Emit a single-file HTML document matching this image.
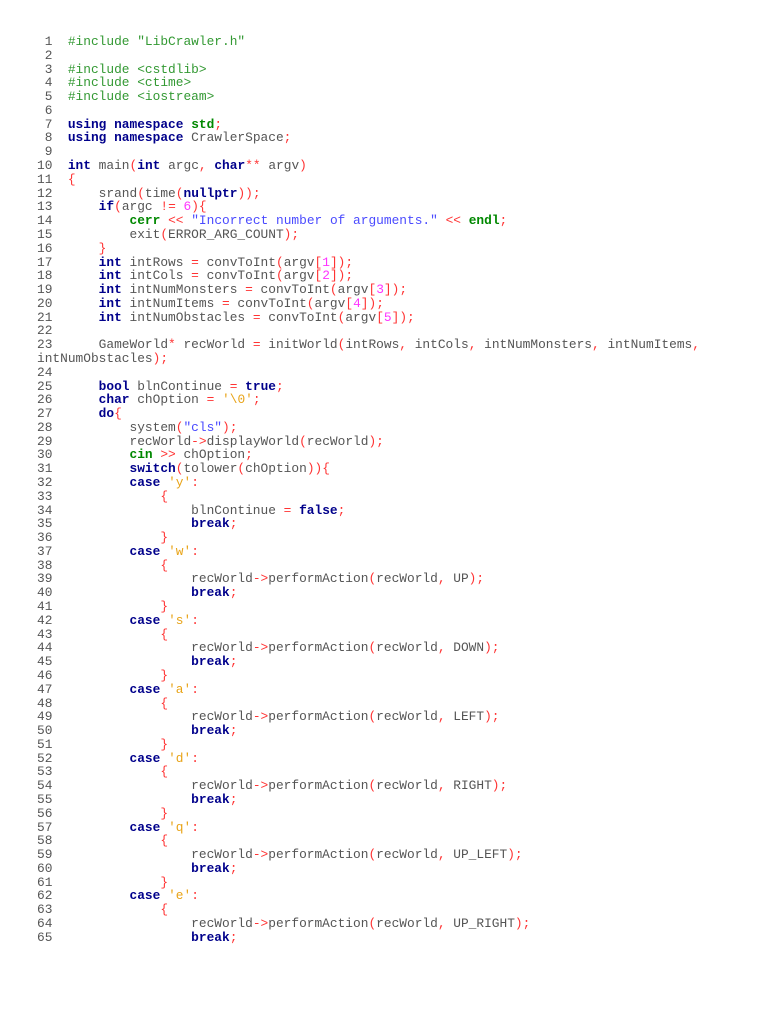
<!DOCTYPE html>
<html><head><meta charset="utf-8"><style>
html,body{margin:0;padding:0;background:#fff;width:768px;height:1024px;overflow:hidden}
pre{position:absolute;left:37px;top:35px;margin:0;font-family:"Liberation Mono","Courier New",monospace;font-size:12.85px;line-height:13.785px;color:#555;white-space:pre}
.k{color:#00008b;font-weight:bold}
.g{color:#008800;font-weight:bold}
.p{color:#339933}
.s{color:#4a4aff}
.n{color:#ff33ff}
.c{color:#e8a317}
.o{color:#ff3333}
</style></head><body>
<pre> 1  <span class="p">#include "LibCrawler.h"</span>
 2
 3  <span class="p">#include &lt;cstdlib&gt;</span>
 4  <span class="p">#include &lt;ctime&gt;</span>
 5  <span class="p">#include &lt;iostream&gt;</span>
 6
 7  <span class="k">using namespace</span> <span class="g">std</span><span class="o">;</span>
 8  <span class="k">using namespace</span> CrawlerSpace<span class="o">;</span>
 9
10  <span class="k">int</span> main<span class="o">(</span><span class="k">int</span> argc<span class="o">,</span> <span class="k">char</span><span class="o">**</span> argv<span class="o">)</span>
11  <span class="o">{</span>
12      srand<span class="o">(</span>time<span class="o">(</span><span class="k">nullptr</span><span class="o">));</span>
13      <span class="k">if</span><span class="o">(</span>argc <span class="o">!=</span> <span class="n">6</span><span class="o">){</span>
14          <span class="g">cerr</span> <span class="o">&lt;&lt;</span> <span class="s">"Incorrect number of arguments."</span> <span class="o">&lt;&lt;</span> <span class="g">endl</span><span class="o">;</span>
15          exit<span class="o">(</span>ERROR_ARG_COUNT<span class="o">);</span>
16      <span class="o">}</span>
17      <span class="k">int</span> intRows <span class="o">=</span> convToInt<span class="o">(</span>argv<span class="o">[</span><span class="n">1</span><span class="o">]);</span>
18      <span class="k">int</span> intCols <span class="o">=</span> convToInt<span class="o">(</span>argv<span class="o">[</span><span class="n">2</span><span class="o">]);</span>
19      <span class="k">int</span> intNumMonsters <span class="o">=</span> convToInt<span class="o">(</span>argv<span class="o">[</span><span class="n">3</span><span class="o">]);</span>
20      <span class="k">int</span> intNumItems <span class="o">=</span> convToInt<span class="o">(</span>argv<span class="o">[</span><span class="n">4</span><span class="o">]);</span>
21      <span class="k">int</span> intNumObstacles <span class="o">=</span> convToInt<span class="o">(</span>argv<span class="o">[</span><span class="n">5</span><span class="o">]);</span>
22
23      GameWorld<span class="o">*</span> recWorld <span class="o">=</span> initWorld<span class="o">(</span>intRows<span class="o">,</span> intCols<span class="o">,</span> intNumMonsters<span class="o">,</span> intNumItems<span class="o">,</span>
intNumObstacles<span class="o">);</span>
24
25      <span class="k">bool</span> blnContinue <span class="o">=</span> <span class="k">true</span><span class="o">;</span>
26      <span class="k">char</span> chOption <span class="o">=</span> <span class="c">'\0'</span><span class="o">;</span>
27      <span class="k">do</span><span class="o">{</span>
28          system<span class="o">(</span><span class="s">"cls"</span><span class="o">);</span>
29          recWorld<span class="o">-&gt;</span>displayWorld<span class="o">(</span>recWorld<span class="o">);</span>
30          <span class="g">cin</span> <span class="o">&gt;&gt;</span> chOption<span class="o">;</span>
31          <span class="k">switch</span><span class="o">(</span>tolower<span class="o">(</span>chOption<span class="o">)){</span>
32          <span class="k">case</span> <span class="c">'y'</span><span class="o">:</span>
33              <span class="o">{</span>
34                  blnContinue <span class="o">=</span> <span class="k">false</span><span class="o">;</span>
35                  <span class="k">break</span><span class="o">;</span>
36              <span class="o">}</span>
37          <span class="k">case</span> <span class="c">'w'</span><span class="o">:</span>
38              <span class="o">{</span>
39                  recWorld<span class="o">-&gt;</span>performAction<span class="o">(</span>recWorld<span class="o">,</span> UP<span class="o">);</span>
40                  <span class="k">break</span><span class="o">;</span>
41              <span class="o">}</span>
42          <span class="k">case</span> <span class="c">'s'</span><span class="o">:</span>
43              <span class="o">{</span>
44                  recWorld<span class="o">-&gt;</span>performAction<span class="o">(</span>recWorld<span class="o">,</span> DOWN<span class="o">);</span>
45                  <span class="k">break</span><span class="o">;</span>
46              <span class="o">}</span>
47          <span class="k">case</span> <span class="c">'a'</span><span class="o">:</span>
48              <span class="o">{</span>
49                  recWorld<span class="o">-&gt;</span>performAction<span class="o">(</span>recWorld<span class="o">,</span> LEFT<span class="o">);</span>
50                  <span class="k">break</span><span class="o">;</span>
51              <span class="o">}</span>
52          <span class="k">case</span> <span class="c">'d'</span><span class="o">:</span>
53              <span class="o">{</span>
54                  recWorld<span class="o">-&gt;</span>performAction<span class="o">(</span>recWorld<span class="o">,</span> RIGHT<span class="o">);</span>
55                  <span class="k">break</span><span class="o">;</span>
56              <span class="o">}</span>
57          <span class="k">case</span> <span class="c">'q'</span><span class="o">:</span>
58              <span class="o">{</span>
59                  recWorld<span class="o">-&gt;</span>performAction<span class="o">(</span>recWorld<span class="o">,</span> UP_LEFT<span class="o">);</span>
60                  <span class="k">break</span><span class="o">;</span>
61              <span class="o">}</span>
62          <span class="k">case</span> <span class="c">'e'</span><span class="o">:</span>
63              <span class="o">{</span>
64                  recWorld<span class="o">-&gt;</span>performAction<span class="o">(</span>recWorld<span class="o">,</span> UP_RIGHT<span class="o">);</span>
65                  <span class="k">break</span><span class="o">;</span></pre>
</body></html>
